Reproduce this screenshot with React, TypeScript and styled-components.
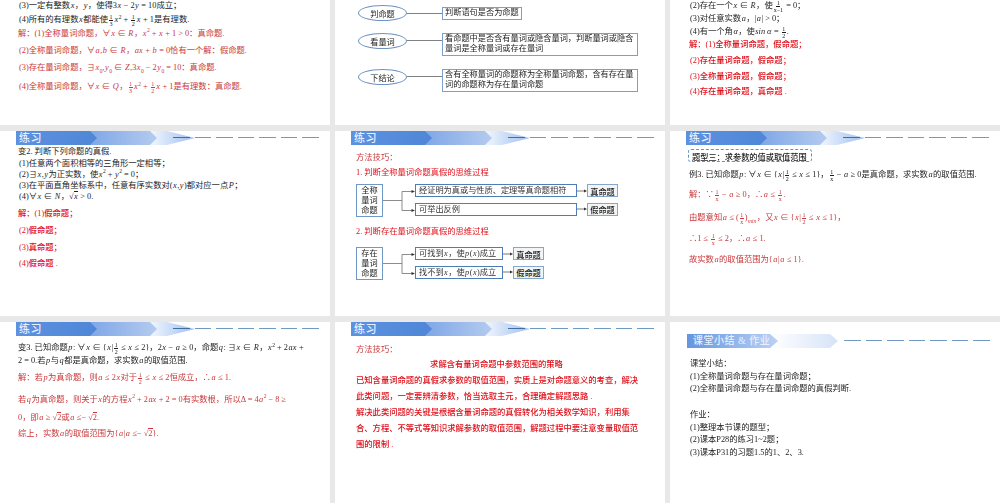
import React from 'react'
import styled, { createGlobalStyle } from 'styled-components'

const Global = createGlobalStyle`
    html, body {
        margin: 0;
        padding: 0;
        background: #e8e8e8;
        overflow: hidden;
    }
    body {
        font-family: "Liberation Serif", "Noto Sans CJK SC", serif;
    }
`

const Deck = styled.div`
    display: grid;
    grid-template-columns: repeat(3, 330px);
    grid-template-rows: 125px 185px 181px;
    column-gap: 5px;
    row-gap: 6px;
    width: 1000px;
    height: 503px;
    overflow: hidden;
    filter: blur(0.4px);
`

const Slide = styled.section`
    background: #fff;
    overflow: hidden;
    display: flex;
    flex-direction: column;
`

const Body = styled.div<{ $pl: number; $pt: number }>`
    padding-left: ${(p) => p.$pl}px;
    padding-top: ${(p) => p.$pt}px;
    display: flex;
    flex-direction: column;
    align-items: flex-start;
`

const tones = {
    ink: '#1c1c1c',
    soft: '#c9373a',
    red: '#e0101a',
}

type LineProps = {
    $mt?: number
    $tone?: keyof typeof tones
    $x?: number
    $bold?: boolean
}

const Line = styled.div<LineProps>`
    height: 12px;
    line-height: 12px;
    white-space: nowrap;
    margin-top: ${(p) => p.$mt ?? 0}px;
    margin-left: ${(p) => p.$x ?? 0}px;
    color: ${(p) => tones[p.$tone ?? 'ink']};
    font-size: 8.3px;
    font-weight: ${(p) => (p.$bold ? 500 : 400)};
`

const M = styled.i`
    font-family: "Liberation Serif", serif;
    font-style: italic;
    padding: 0 0.5px;
`

const FracBox = styled.span`
    display: inline-flex;
    flex-direction: column;
    align-items: center;
    vertical-align: middle;
    font-size: 6px;
    line-height: 6px;
    margin: 0 1px;
`

const FracTop = styled.span`
    border-bottom: 0.5px solid currentColor;
    padding: 0 0.5px;
`

const Frac = ({ n, d }: { n: string; d: string }) => (
    <FracBox>
        <FracTop>{n}</FracTop>
        <span>{d}</span>
    </FracBox>
)

const Root = styled.span`
    border-top: 0.5px solid currentColor;
`

const Sup = styled.sup`
    font-size: 5.5px;
    line-height: 0;
`

const Sub = styled.sub`
    font-size: 5.5px;
    line-height: 0;
`

// slide title band
const HeadRow = styled.div<{ $mt?: number; $ml?: number }>`
    display: flex;
    align-items: center;
    height: 14px;
    flex: none;
    margin-top: ${(p) => p.$mt ?? 0}px;
    margin-left: ${(p) => p.$ml ?? 16}px;
`

type ChevronProps = { $w: number; $ml?: number; $from: string; $to: string; $z: number; $notch?: number; $pl?: number; $fs?: number }

const Chevron = styled.div<ChevronProps>`
    position: relative;
    z-index: ${(p) => p.$z};
    flex: none;
    box-sizing: border-box;
    width: ${(p) => p.$w}px;
    height: 14px;
    margin-left: ${(p) => p.$ml ?? 0}px;
    padding-left: ${(p) => p.$pl ?? 3}px;
    background: linear-gradient(90deg, ${(p) => p.$from}, ${(p) => p.$to});
    clip-path: polygon(0 0, calc(100% - ${(p) => p.$notch ?? 7}px) 0, 100% 50%, calc(100% - ${(p) => p.$notch ?? 7}px) 100%, 0 100%);
    color: #e6efff;
    font-size: ${(p) => p.$fs ?? 11}px;
    line-height: 14px;
    white-space: nowrap;
    font-weight: 500;
    letter-spacing: 0.5px;
`

const Dashes = styled.div<{ $ml: number }>`
    position: relative;
    z-index: 4;
    display: flex;
    gap: 5px;
    margin-left: ${(p) => p.$ml}px;
    margin-top: -1px;
`

const Dash = styled.div<{ $dark?: boolean }>`
    width: 16.5px;
    height: 1px;
    background: ${(p) => (p.$dark ? '#3f6f9f' : '#6f9ac4')};
`

const Practice = () => (
    <HeadRow>
        <Chevron $w={81} $z={3} $from="#5c92e0" $to="#4f86d6">练习</Chevron>
        <Chevron $w={68} $ml={-8} $z={2} $from="#7ea6e6" $to="#b4cbf0" />
        <Chevron $w={46} $ml={-8} $z={1} $from="#f4f8fe" $to="#9dbef0" $notch={28} />
        <Dashes $ml={-22}>
            <Dash $dark />
            {[0, 1, 2, 3, 4, 5].map((i) => (
                <Dash key={i} />
            ))}
        </Dashes>
    </HeadRow>
)

const Summary = () => (
    <HeadRow $mt={12} $ml={17}>
        <Chevron $w={91} $z={3} $from="#6496e0" $to="#bcd1f3" $notch={8} $pl={6} $fs={10}>课堂小结 &amp; 作业</Chevron>
        <Chevron $w={67} $ml={-7} $z={2} $from="#ffffff" $to="#d6e3f8" $notch={8} />
        <Dashes $ml={6}>
            <Dash />
            {[0, 1, 2, 3, 4, 5].map((i) => (
                <Dash key={i} />
            ))}
        </Dashes>
    </HeadRow>
)

// flow chart parts on the second slide
const StepRow = styled.div<{ $mt: number }>`
    display: flex;
    align-items: flex-start;
    margin-top: ${(p) => p.$mt}px;
`

const Oval = styled.div`
    flex: none;
    width: 49px;
    height: 16px;
    box-sizing: border-box;
    border: 1px solid #6f93c0;
    border-radius: 50%;
    display: flex;
    align-items: center;
    justify-content: center;
    font-size: 8.2px;
    color: #1c1c1c;
`

const Stem = styled.div`
    flex: none;
    width: 35px;
    height: 1px;
    margin-top: 7.5px;
    background: #808080;
`

const StepBox = styled.div<{ $w: number; $h: number; $top?: number }>`
    flex: none;
    box-sizing: border-box;
    width: ${(p) => p.$w}px;
    height: ${(p) => p.$h}px;
    margin-top: ${(p) => p.$top ?? 0}px;
    padding: 0 2px;
    border: 1px solid #7da0c9;
    display: flex;
    align-items: center;
    font-size: 8.2px;
    line-height: 10px;
    color: #1c1c1c;
`

// decision diagrams on the method slide
const Flow = styled.div<{ $mt: number }>`
    display: flex;
    align-items: flex-start;
    margin-top: ${(p) => p.$mt}px;
`

const Subject = styled.div`
    flex: none;
    box-sizing: border-box;
    width: 27px;
    height: 33px;
    border: 1px solid #6f98c6;
    text-align: center;
    font-size: 8.2px;
    line-height: 10px;
    color: #1c1c1c;
    display: flex;
    align-items: center;
    justify-content: center;
`

const Branches = styled.div`
    display: flex;
    flex-direction: column;
    gap: 5.5px;
`

const BranchRow = styled.div`
    display: flex;
    align-items: center;
`

const Cond = styled.div<{ $w: number }>`
    flex: none;
    box-sizing: border-box;
    width: ${(p) => p.$w}px;
    height: 13px;
    padding-left: 3px;
    border: 1px solid #4d7db4;
    line-height: 11px;
    white-space: nowrap;
    font-size: 8.2px;
    color: #333;
`

const Verdict = styled.div`
    flex: none;
    box-sizing: border-box;
    width: 31px;
    height: 13px;
    border: 1px solid #86a7cc;
    background: #f3f4f6;
    display: flex;
    align-items: center;
    justify-content: center;
    font-size: 8.2px;
    font-weight: 500;
    color: #1c1c1c;
`

const Fork = () => (
    <svg width="32" height="33" viewBox="0 0 32 33" style={{ flex: 'none' }}>
        <path d="M0 16.5H19M19 7.5V26.5M19 7.5H29M19 26.5H29" fill="none" stroke="#707070" strokeWidth="0.8" />
        <path d="M32 7.5L28.5 6V9ZM32 26.5L28.5 25V28Z" fill="#333" />
    </svg>
)

const Arrow = ({ w }: { w: number }) => (
    <svg width={w} height="6" viewBox={`0 0 ${w} 6`} style={{ flex: 'none' }}>
        <path d={`M0 3H${w - 2}`} stroke="#555" strokeWidth="0.8" />
        <path d={`M${w} 3L${w - 3} 1.5V4.5Z`} fill="#333" />
    </svg>
)

const Tag = styled.div`
    box-sizing: border-box;
    width: 124px;
    height: 13px;
    margin-top: 4px;
    margin-left: -1px;
    padding-left: 3px;
    border: 1px dashed #5d92cc;
    border-radius: 3px;
    display: flex;
    align-items: center;
    font-size: 8.2px;
    font-weight: 500;
    color: #1c1c1c;
`

const Center = styled(Line)`
    align-self: stretch;
    text-align: center;
    padding-right: 28px;
`

export default function App() {
    return (
        <>
            <Global />
            <Deck>
                <Slide>
                    <Body $pl={19} $pt={0}>
                        <Line>(3)一定有整数<M>x</M>，<M>y</M>，使得3<M>x</M> − 2<M>y</M> = 10成立；</Line>
                        <Line $mt={1.5}>(4)所有的有理数<M>x</M>都能使<Frac n="1" d="3" /><M>x</M><Sup>2</Sup> + <Frac n="1" d="2" /><M>x</M> + 1是有理数.</Line>
                        <Line $mt={2} $x={-1} $tone="soft">解：(1)全称量词命题，∀<M>x</M> ∈ <M>R</M>，<M>x</M><Sup>2</Sup> + <M>x</M> + 1 &gt; 0：真命题.</Line>
                        <Line $mt={5.5} $tone="soft">(2)全称量词命题，∀<M>a</M>,<M>b</M> ∈ <M>R</M>，<M>ax</M> + <M>b</M> = 0恰有一个解：假命题.</Line>
                        <Line $mt={4.5} $tone="soft">(3)存在量词命题，∃<M>x</M><Sub>0</Sub>,<M>y</M><Sub>0</Sub> ∈ <M>Z</M>,3<M>x</M><Sub>0</Sub> − 2<M>y</M><Sub>0</Sub> = 10：真命题.</Line>
                        <Line $mt={7.5} $tone="soft">(4)全称量词命题，∀<M>x</M> ∈ <M>Q</M>，<Frac n="1" d="3" /><M>x</M><Sup>2</Sup> + <Frac n="1" d="2" /><M>x</M> + 1是有理数：真命题.</Line>
                    </Body>
                </Slide>

                <Slide>
                    <Body $pl={23} $pt={5}>
                        <StepRow $mt={0}>
                            <Oval>判命题</Oval>
                            <Stem />
                            <StepBox $w={80} $h={13} $top={1.5}>判断语句是否为命题</StepBox>
                        </StepRow>
                        <StepRow $mt={11.5}>
                            <Oval>看量词</Oval>
                            <Stem />
                            <StepBox $w={196} $h={23}>看命题中是否含有量词或隐含量词，判断量词或隐含量词是全称量词或存在量词</StepBox>
                        </StepRow>
                        <StepRow $mt={13}>
                            <Oval>下结论</Oval>
                            <Stem />
                            <StepBox $w={196} $h={23}>含有全称量词的命题称为全称量词命题，含有存在量词的命题称为存在量词命题</StepBox>
                        </StepRow>
                    </Body>
                </Slide>

                <Slide>
                    <Body $pl={20} $pt={0}>
                        <Line>(2)存在一个<M>x</M> ∈ <M>R</M>，使<Frac n="1" d="x−1" /> = 0；</Line>
                        <Line $mt={0.5}>(3)对任意实数<M>a</M>，|<M>a</M>| &gt; 0；</Line>
                        <Line $mt={1}>(4)有一个角<M>α</M>，使<M>sin α</M> = <Frac n="1" d="2" />.</Line>
                        <Line $mt={1.5} $x={-1} $tone="red" $bold>解：(1)全称量词命题，假命题；</Line>
                        <Line $mt={3.5} $tone="red" $bold>(2)存在量词命题，假命题；</Line>
                        <Line $mt={4} $tone="red" $bold>(3)全称量词命题，假命题；</Line>
                        <Line $mt={3.5} $tone="red" $bold>(4)存在量词命题，真命题 .</Line>
                    </Body>
                </Slide>

                <Slide>
                    <Practice />
                    <Body $pl={18} $pt={1}>
                        <Line>变2. 判断下列命题的真假.</Line>
                        <Line $mt={-0.5} $x={1}>(1)任意两个面积相等的三角形一定相等；</Line>
                        <Line $mt={-1} $x={1}>(2)∃<M>x</M>,<M>y</M>为正实数，使<M>x</M><Sup>2</Sup> + <M>y</M><Sup>2</Sup> = 0；</Line>
                        <Line $mt={-0.5} $x={1}>(3)在平面直角坐标系中，任意有序实数对(<M>x</M>,<M>y</M>)都对应一点<M>P</M>；</Line>
                        <Line $mt={-1} $x={1}>(4)∀<M>x</M> ∈ <M>N</M>，√<Root><M>x</M></Root> &gt; 0.</Line>
                        <Line $mt={4.5} $tone="red" $bold>解：(1)假命题；</Line>
                        <Line $mt={5} $x={1} $tone="red" $bold>(2)假命题；</Line>
                        <Line $mt={5} $x={1} $tone="red" $bold>(3)真命题；</Line>
                        <Line $mt={4.5} $x={1} $tone="red" $bold>(4)假命题 .</Line>
                    </Body>
                </Slide>

                <Slide>
                    <Practice />
                    <Body $pl={21} $pt={7}>
                        <Line $tone="soft">方法技巧：</Line>
                        <Line $mt={2.5} $tone="red">1. 判断全称量词命题真假的思维过程</Line>
                        <Flow $mt={5.5}>
                            <Subject>全称<br />量词<br />命题</Subject>
                            <Fork />
                            <Branches>
                                <BranchRow>
                                    <Cond $w={162}>经证明为真或与性质、定理等真命题相符</Cond>
                                    <Arrow w={10} />
                                    <Verdict>真命题</Verdict>
                                </BranchRow>
                                <BranchRow>
                                    <Cond $w={162}>可举出反例</Cond>
                                    <Arrow w={10} />
                                    <Verdict>假命题</Verdict>
                                </BranchRow>
                            </Branches>
                        </Flow>
                        <Line $mt={8.5} $tone="red">2. 判断存在量词命题真假的思维过程</Line>
                        <Flow $mt={9.5}>
                            <Subject>存在<br />量词<br />命题</Subject>
                            <Fork />
                            <Branches>
                                <BranchRow>
                                    <Cond $w={88}>可找到<M>x</M>，使<M>p</M>(<M>x</M>)成立</Cond>
                                    <Arrow w={10} />
                                    <Verdict>真命题</Verdict>
                                </BranchRow>
                                <BranchRow>
                                    <Cond $w={88}>找不到<M>x</M>，使<M>p</M>(<M>x</M>)成立</Cond>
                                    <Arrow w={10} />
                                    <Verdict>假命题</Verdict>
                                </BranchRow>
                            </Branches>
                        </Flow>
                    </Body>
                </Slide>

                <Slide>
                    <Practice />
                    <Body $pl={19} $pt={0}>
                        <Tag>题型三：求参数的值或取值范围</Tag>
                        <Line $mt={6.5}>例3. 已知命题<M>p</M>: ∀<M>x</M> ∈ {'{'}<M>x</M>|<Frac n="1" d="2" /> ≤ <M>x</M> ≤ 1{'}'}，<Frac n="1" d="x" /> − <M>a</M> ≥ 0是真命题，求实数<M>a</M>的取值范围.</Line>
                        <Line $mt={8} $tone="soft">解：∵<Frac n="1" d="x" /> − <M>a</M> ≥ 0，∴<M>a</M> ≤ <Frac n="1" d="x" />.</Line>
                        <Line $mt={11} $tone="soft">由题意知<M>a</M> ≤ (<Frac n="1" d="x" />)<Sub><M>min</M></Sub>，又<M>x</M> ∈ {'{'}<M>x</M>|<Frac n="1" d="2" /> ≤ <M>x</M> ≤ 1{'}'}，</Line>
                        <Line $mt={9.5} $tone="soft">∴1 ≤ <Frac n="1" d="x" /> ≤ 2，∴<M>a</M> ≤ 1.</Line>
                        <Line $mt={9} $tone="soft">故实数<M>a</M>的取值范围为{'{'}<M>a</M>|<M>a</M> ≤ 1{'}'}.</Line>
                    </Body>
                </Slide>

                <Slide>
                    <Practice />
                    <Body $pl={18} $pt={5.5}>
                        <Line>变3. 已知命题<M>p</M>: ∀<M>x</M> ∈ {'{'}<M>x</M>|<Frac n="1" d="2" /> ≤ <M>x</M> ≤ 2{'}'}，2<M>x</M> − <M>a</M> ≥ 0，命题<M>q</M>: ∃<M>x</M> ∈ <M>R</M>，<M>x</M><Sup>2</Sup> + 2<M>ax</M> +</Line>
                        <Line $mt={1.5}>2 = 0.若<M>p</M>与<M>q</M>都是真命题，求实数<M>a</M>的取值范围.</Line>
                        <Line $mt={4.5} $tone="soft">解：若<M>p</M>为真命题，则<M>a</M> ≤ 2<M>x</M>对于<Frac n="1" d="2" /> ≤ <M>x</M> ≤ 2恒成立，∴<M>a</M> ≤ 1.</Line>
                        <Line $mt={10.5} $tone="soft">若<M>q</M>为真命题，则关于<M>x</M>的方程<M>x</M><Sup>2</Sup> + 2<M>ax</M> + 2 = 0有实数根，所以Δ = 4<M>a</M><Sup>2</Sup> − 8 ≥</Line>
                        <Line $mt={5.5} $tone="soft">0，即<M>a</M> ≥ √<Root>2</Root>或<M>a</M> ≤− √<Root>2</Root>.</Line>
                        <Line $mt={4.5} $tone="soft">综上，实数<M>a</M>的取值范围为{'{'}<M>a</M>|<M>a</M> ≤− √<Root>2</Root>{'}'}.</Line>
                    </Body>
                </Slide>

                <Slide>
                    <Practice />
                    <Body $pl={21} $pt={8}>
                        <Line $tone="soft">方法技巧：</Line>
                        <Center $mt={3} $tone="red" $bold>求解含有量词命题中参数范围的策略</Center>
                        <Line $mt={4} $tone="red" $bold>已知含量词命题的真假求参数的取值范围，实质上是对命题意义的考查，解决</Line>
                        <Line $mt={4} $tone="red" $bold>此类问题，一定要辨清参数，恰当选取主元，合理确定解题思路 .</Line>
                        <Line $mt={3.5} $tone="red" $bold>解决此类问题的关键是根据含量词命题的真假转化为相关数学知识，利用集</Line>
                        <Line $mt={4} $tone="red" $bold>合、方程、不等式等知识求解参数的取值范围，解题过程中要注意变量取值范</Line>
                        <Line $mt={4} $tone="red" $bold>围的限制 .</Line>
                    </Body>
                </Slide>

                <Slide>
                    <Summary />
                    <Body $pl={20} $pt={9.5}>
                        <Line>课堂小结：</Line>
                        <Line $mt={1}>(1)全称量词命题与存在量词命题；</Line>
                        <Line $mt={0.5}>(2)全称量词命题与存在量词命题的真假判断.</Line>
                        <Line $mt={13.5}>作业：</Line>
                        <Line $mt={1}>(1)整理本节课的题型；</Line>
                        <Line $mt={0.5}>(2)课本P28的练习1~2题；</Line>
                        <Line $mt={1}>(3)课本P31的习题1.5的1、2、3.</Line>
                    </Body>
                </Slide>
            </Deck>
        </>
    )
}
